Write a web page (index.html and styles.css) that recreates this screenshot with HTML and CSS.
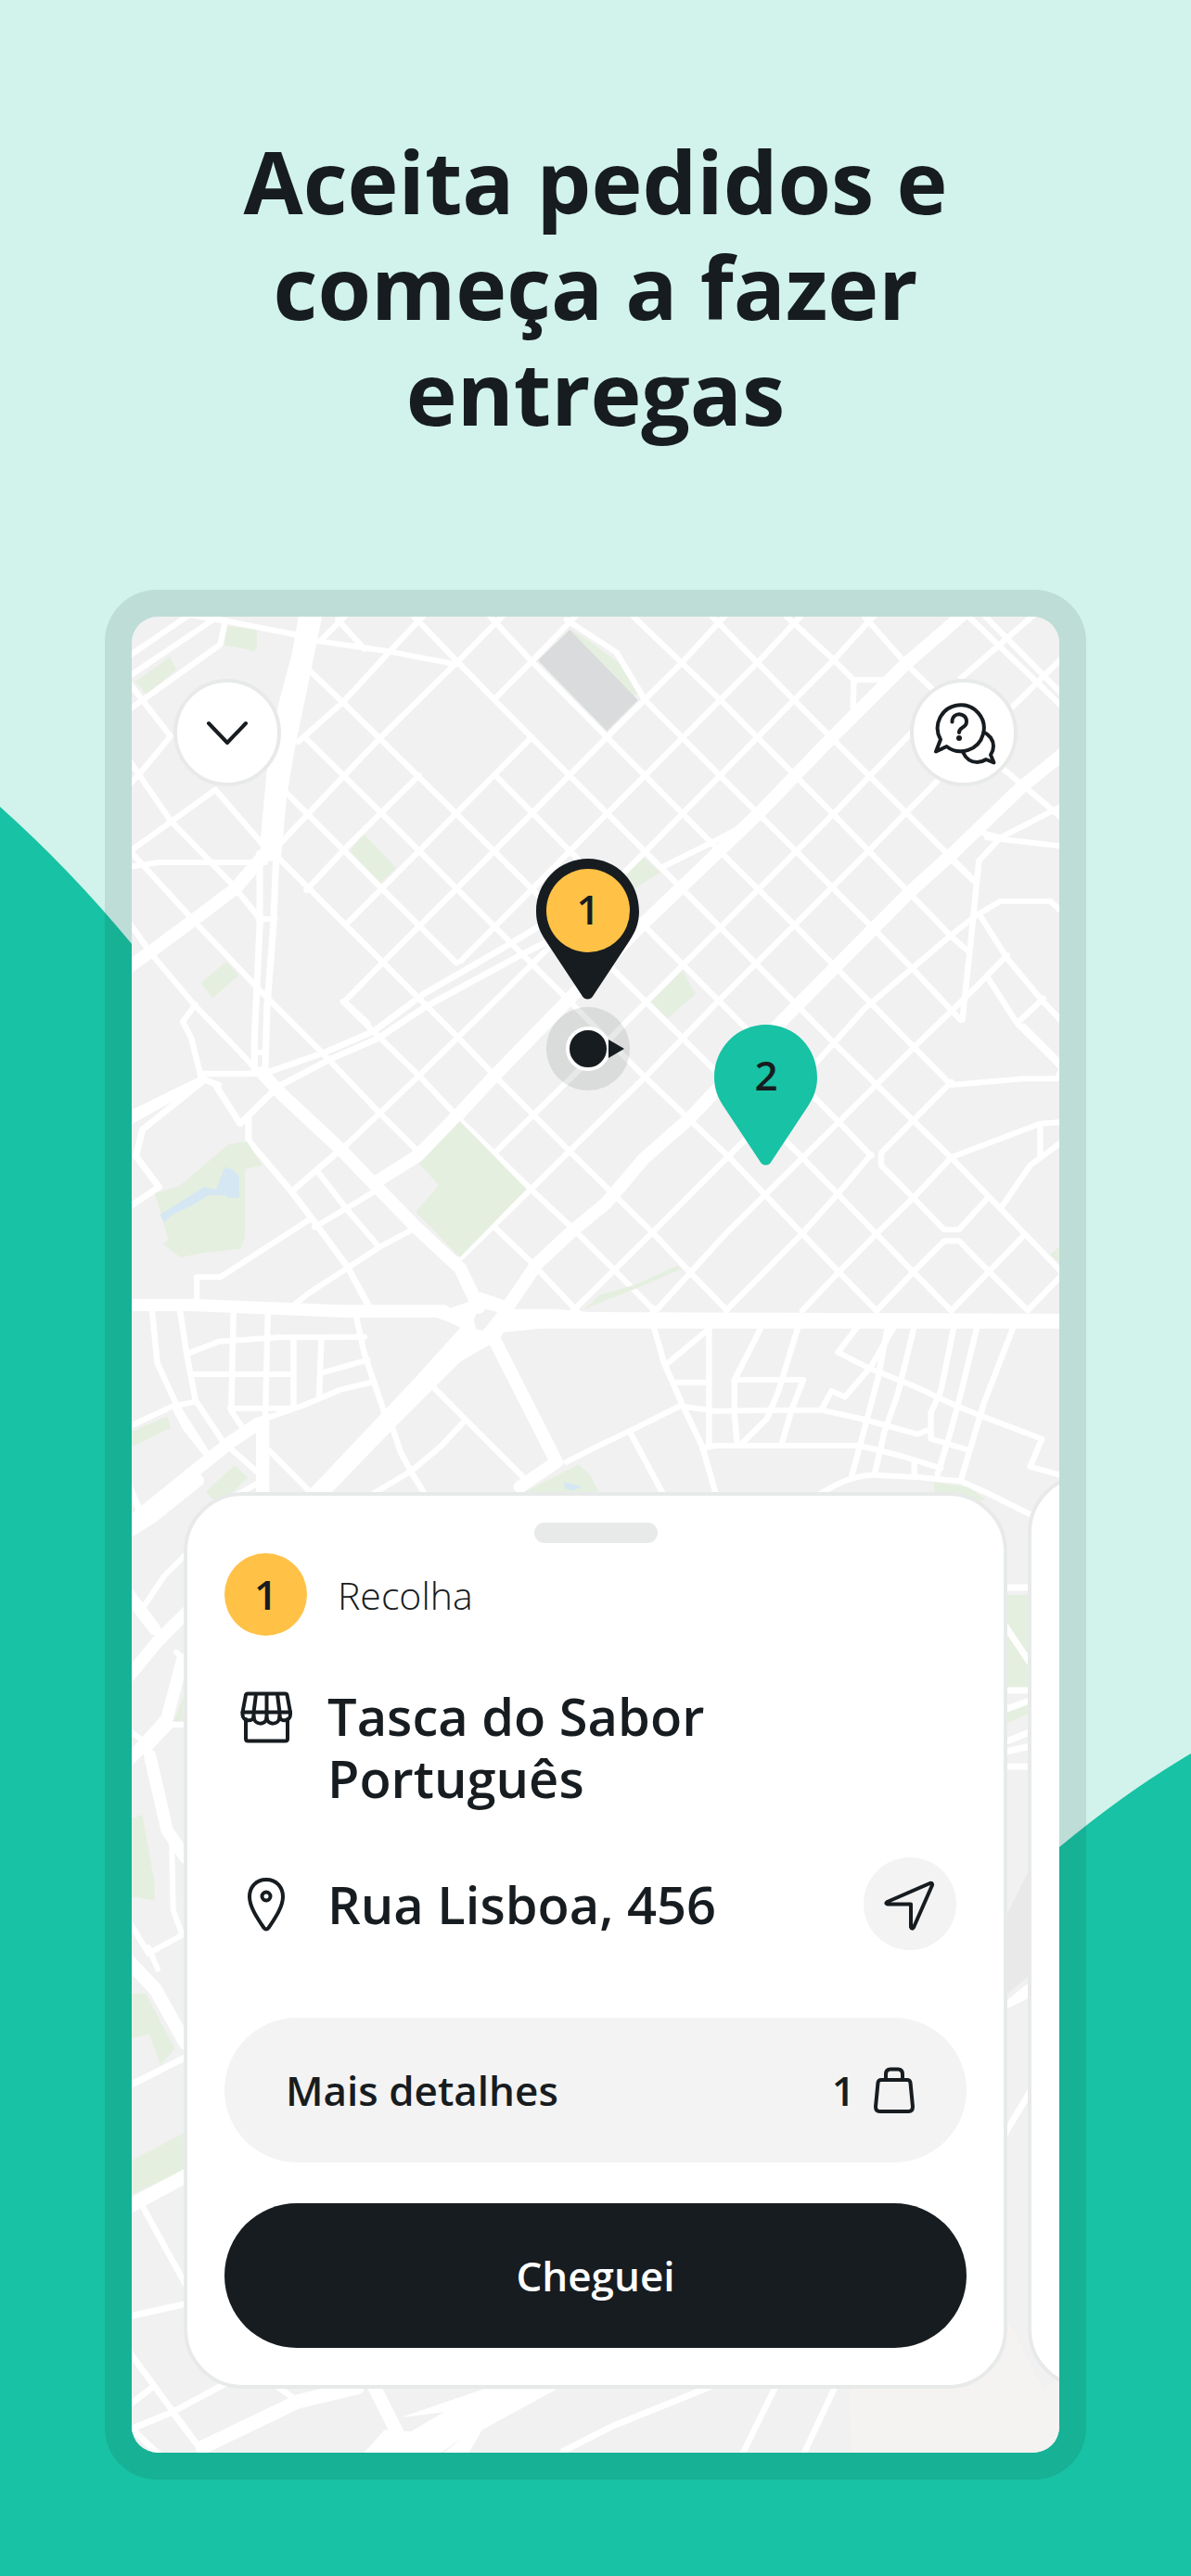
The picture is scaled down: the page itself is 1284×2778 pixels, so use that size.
FILE: index.html
```html
<!DOCTYPE html>
<html lang="pt">

<head>
    <meta charset="UTF-8" />
    <meta name="viewport" content="width=device-width, initial-scale=1.0" />
    <title>Aceita pedidos e começa a fazer entregas</title>
    <link rel="stylesheet" href="styles.css">
</head>

<body>
    <svg class="wave" viewBox="0 0 1284 2778" preserveAspectRatio="none" aria-hidden="true">
        <path d="M0 870Q76 938 142 1018Q600 2480 1142 1992Q1214 1932 1284 1891V2778H0Z" />
    </svg>

    <h1 class="title">Aceita pedidos e começa a fazer entregas</h1>

    <main class="phone">
        <div class="screen">
            <svg class="map" viewBox="142 665 1000 1980" preserveAspectRatio="xMidYMin slice">
                <!-- north part of the city -->
                <g transform="translate(100 620) scale(.357143 .333333)">
                    <g class="park">
                        <path d="M400 165l95 12v55l-10 16-20-8-68-12zM128 345l105-80 20 42-90 80zM818 838l98 110-48 50-92-105zM403 1250l38 45-80 75-35-50zM1440 175l60 40 90 70 56 100-45 20-50 100-205-230z" />
                        <path d="M1662 912l50 50-80 55-30-50zM1780 1280l40 75-85 80-50-55z" />
                    </g>
                    <path class="building" d="M1440 178l206 227-94 100-208-228z" />
                    <g class="roads">
                        <!-- old town, left -->
                        <path d="M110 262L290 130M110 328L370 140M110 436L385 225L400 150L300 130M370 142L620 195M670 212L880 245L1100 290" />
                        <path d="M110 350L235 522L140 645L100 690M110 600L235 795L420 1000L510 1120M110 896L370 695L520 880M110 890L310 1125L510 1350L710 1565L865 1740L975 1858M110 1125L180 1230L310 1395L410 1505L485 1590M310 1390L272 1445L298 1500L330 1640" />
                        <path d="M110 945L200 930H520M500 1113H550M492 1545H520" />
                        <!-- streets going south-east -->
                        <path d="M560 915L1097 1490L1213 1620L1440 1865L1692 2130L1802 2255L1915 2380" />
                        <path d="M580 700L873 1015L1098 1255M755 1380L850 1480L985 1620L1090 1740M1110 1765L1325 1990L1445 2110L1580 2255L1695 2380M1213 2110L1325 2225L1465 2385" />
                        <path d="M640 525L873 772L1213 1138L1440 1380L1667 1625L1922 1885L2252 2255L2365 2380" />
                        <path d="M645 300L755 412L1097 772L1440 1138L1780 1498L2142 1885L2477 2255L2591 2380" />
                        <path d="M740 145L820 240M1215 648L1440 893L1887 1375L2252 1770L2350 1880" />
                        <path d="M970 135L1213 405L1553 772L1892 1138L2252 1530L2591 1885L2920 2250" />
                        <path d="M1200 135L1325 280L1552 525L1892 893L2123 1138L2371 1410L2591 1650" />
                        <path d="M1430 145L1580 250L1667 405L1892 648L2122 893L2362 1150L2480 1280L2620 1440" />
                        <path d="M1632 135L1895 405L2232 770L2592 1170L2640 1215M1870 135L2117 405L2342 648L2662 990M2095 135L2237 275L2302 345M2330 135L2457 290L2540 375M2640 130L2930 430M2690 130L2930 390" />
                        <!-- streets going north-east -->
                        <path d="M565 870L760 648L865 530L1097 285L1240 130M620 540L755 412L890 255L1000 130M690 210L760 135M645 1020L755 893L985 648M765 1130L985 893L1097 772L1325 525M1215 400L1325 280L1460 130" />
                        <path d="M830 1450L760 1380L875 1255L1325 772L1552 525L1782 280L1910 130M1110 1250L1553 772L2010 280L2140 130M600 1995L755 1855L985 1620L1335 1250L1670 893L2117 405L2237 275L2360 130M1213 1870L1460 1610L1788 1255L2237 772L2480 500M2620 335L2722 240L2840 130" />
                        <path d="M1110 2210L1325 1985L1552 1745L1667 1625L1892 1375L2342 893L2560 655L2930 265" />
                        <path d="M1450 2380L1687 2130L2027 1765L2333 1400L2592 1165L2662 1105L2740 1055H2890L2930 1095M1700 2380L1912 2130L2252 1770L2477 1530L2660 1340L2760 1230" />
                        <!-- right side -->
                        <path d="M2302 340H2390M2297 345L2295 430M2740 620L2930 790M2740 850L2930 745M2700 850L2930 878M2670 830L2740 850L2675 925L2650 1190L2625 1440M2600 930L2665 995M2680 1105L2760 1240L2860 1370L2930 1450M2700 1300L2790 1450L2930 1600M2790 1450L2870 1370" />
                        <path d="M1720 945L1870 865L1950 820" />
                    </g>
                    <g class="roads boulevard">
                        <path d="M110 1268L180 1215L300 1120L430 1015L530 890" />
                        <path d="M2630 125L2452 290L2232 525L2012 770L1772 1015L1652 1138L1440 1370L1213 1620L1100 1750L980 1880L860 1960" />
                        <path d="M2950 560L2800 690L2592 905L2472 1020L2242 1268L2092 1430L1800 1760L1662 1890L1552 2030L1450 2120L1340 2230L1245 2380" />
                        <path d="M510 1610L570 1680L745 1855L975 2110L1110 2245L1165 2370" />
                    </g>
                    <g class="roads parkway">
                        <path d="M504 900V1140L488 1500V1600M554 900L545 1140L526 1400L520 1620" />
                        <path d="M330 1614H460L520 1612L700 1545L850 1475L1000 1355L1250 1200L1380 1115M560 1655L720 1565L860 1500L1000 1400L1300 1225L1440 1150" />
                        <path d="M110 1746L330 1630L380 1650M110 1770L330 1640L150 1795L130 1880L200 1980L110 2045M370 1650L445 1775L550 1665M470 1755V1830L600 1995L660 2080L770 2240L840 2380" />
                    </g>
                    <path class="avenue" d="M622 130H693L655 330L610 560L585 720L568 920L510 930L505 870L525 640L560 420L600 260Z" />
                </g>

                <!-- around the ring road -->
                <g transform="translate(100 1110) scale(.357143 .333333)">
                    <g class="park">
                        <path d="M187 530L260 508L410 372L465 362L512 440L460 452V670L445 710L340 722L265 738L212 695L228 680L212 620Z" />
                        <path d="M1108 297L1310 517L1108 738L975 590L1045 505L985 435Z" />
                        <path d="M110 1305L225 1252L235 1290L110 1355ZM428 1410L468 1450L400 1520L360 1520L342 1495ZM1300 1500L1465 1408L1500 1440L1530 1500ZM1485 905L1530 860L1640 825L1765 765L1778 775L1650 835L1530 885Z" />
                        <path d="M2540 1465L2640 1480L2695 1520L2670 1530L2540 1495ZM2930 690L2890 730L2930 765Z" />
                    </g>
                    <path class="water" d="M203 600L335 510L372 518L385 480L400 445L425 455L442 475V545H410L400 537H350L300 570L240 600L215 625ZM1422 1465L1475 1478L1450 1495L1425 1485Z" />
                    <g class="roads">
                        <path d="M675 455L765 580L865 705M600 525L740 395M670 640L765 580L850 525M970 645L865 705L765 775L650 855L610 890M655 615L385 802H314V890" />
                        <path d="M178 900L195 1080L255 1220L350 1380M262 900L285 1060L310 1200L400 1345M425 900L418 1235L450 1285M529 900L520 1290M290 1048L380 1010L560 997L820 995M300 1116H605M606 1000V1225M415 1226H610M690 1000L683 1195M690 1112L830 1070M793 920L820 1050L880 1240M520 1260L640 1215L750 1165L850 1140" />
                        <path d="M100 1290L240 1220L310 1205M250 1230L280 1290L350 1385M420 1360L520 1455L430 1510M530 1360L650 1490M1030 1160L1300 1450M1120 1270L1050 1350L960 1430L850 1500M905 1290L930 1370L960 1430L1000 1500M100 1450L140 1560M1430 1400L1512 1355L1620 1300L1780 1215" />
                        <path d="M1690 900L1695 970L1725 1080L1780 1215L1840 1350L1880 1500M1620 1300L1720 1500M1730 1085L1860 970M1860 960V1350M1750 1142H1860M1780 1220L1880 1235L2040 1232H2200L2320 1260L2490 1310L2525 1295" />
                        <path d="M2020 960L1937 1134V1240L1945 1340M2130 960L2070 1170L2035 1260L1960 1340M1937 1134H2145L2110 1230L2080 1340M1840 1356L1880 1347H2315L2440 1380L2560 1420M2310 960L2250 1045L2340 1095L2480 1155L2600 1215L2680 1250L2865 1325L2830 1415L2930 1445" />
                        <path d="M2420 960L2350 1090L2270 1190L2230 1170L2200 1230M2400 960L2370 1130L2340 1250L2290 1450M2480 960L2430 1180L2390 1300L2360 1440M2600 960L2560 1170L2530 1240V1325L2640 1360M2670 960L2620 1180L2590 1300L2550 1440M2780 960L2690 1210L2620 1460M2480 1400V1440" />
                        <path d="M2200 1500Q2290 1440 2360 1442L2500 1450L2620 1462L2700 1500L2840 1575" />
                        <path d="M2592 180L2810 160H2910L2930 120L2810 -10M2590 415L2860 305L2930 300M2860 310V410M2740 580L2830 440L2930 360" />
                        <path d="M2592 170L2477 295L2380 400V440L2477 545L2570 648H2615L2702 545M2350 405L2247 535L2142 660L2027 785L1912 910M2592 415L2477 545L2367 660L2252 785L2142 910M2367 910L2477 785L2570 685H2615L2707 785L2822 910L2930 790M2592 910L2812 665" />
                    </g>
                    <g class="roads boulevard">
                        <path d="M110 892H300L750 912H1060M1250 942H2930" />
                        <path d="M1080 1075L1000 1160L850 1310L670 1500L600 1580" />
                        <path d="M1215 1010L1400 1400L1290 1480M110 1600L410 1340L500 1275M513 1270V1500" />
                    </g>
                    <path class="avenue" d="M1250 905H1400L1500 915L2930 920V968H1350L1240 980L1225 1010L1190 1025L1110 1075L1030 1160L900 1300L720 1500H645L980 1120L1110 965L1070 945L1030 930V898L1070 905L1140 880L1145 860L1170 850L1250 880ZM1165 900L1150 940L1157 970L1178 975L1222 915Z" />
                </g>

                <!-- strip left of the order card -->
                <g transform="translate(130 1600) scale(.333333)">
                    <path class="park" d="M30 1085L70 1070L110 1290V1348L30 1335ZM203 690V768H172Z" />
                    <g class="roads">
                        <path d="M30 10L70 100M80 390L140 300L220 220M30 800L70 830M165 1130L170 1380L200 1460L90 1520L30 1420M90 1500L120 1570M180 545L205 570M80 870L165 780H220" />
                    </g>
                    <g class="roads boulevard">
                        <path d="M10 165L100 110L250 -10M30 620L120 510L220 410M20 350L110 470M200 570L150 760L70 850L20 900M95 880L150 1120L210 1210" />
                    </g>
                </g>

                <!-- strip between the two order cards -->
                <path class="park" d="M1086 1720H1110V1820H1086ZM1086 1846L1110 1836V1848L1086 1858Z" />
                <path class="pier" d="M1086 2064L1110 2015V2130L1086 2150Z" />
                <path class="beach" d="M914 2521L1060 2500L1080 2490L1125 2577L1145 2560V2650H918Z" />
                <g class="street">
                    <path d="M1080 1712H1115M1080 1748L1115 1800M1080 1823H1115M1080 1845L1115 1832M1080 1880L1115 1866M1080 1890L1115 1882M1080 1905H1115M1080 2166L1115 2138M1080 2165L1115 2148M1084 2300L1114 2250" />
                </g>

                <!-- harbour side -->
                <g transform="translate(100 2100) scale(.357143 .382653)">
                    <path class="park" d="M100 130H160L248 285L205 332L170 245L100 262ZM100 610L280 520V625L100 705Z" />
                    <g class="roads">
                        <path d="M110 390L280 310M150 730L280 950M110 1040L280 1005M110 1140L330 1420M110 1290L180 1240M110 1360L240 1310L400 1230M240 1310L330 1420M110 1350L200 1430M560 1240L620 1280M1420 1420L1568 1350L1860 1240M2060 1240L1960 1430M2240 1240L2145 1430" />
                    </g>
                    <g class="roads boulevard">
                        <path d="M100 30L190 120L280 270M110 730L290 640M330 1410L620 1280L800 1240" />
                        <path d="M850 1240L920 1370L840 1430" />
                    </g>
                    <path class="avenue" d="M930 1325L1180 1245H1400L1175 1360L1135 1425H1060L1120 1380L1050 1425H820L880 1360L960 1365L1060 1310Z" />
                </g>

                <!-- courier position -->
                <circle class="halo" cx="634" cy="1131" r="45" />
                <circle class="dot" cx="634" cy="1131" r="22" />
                <path class="heading" d="M656 1121l17 10-17 10z" />

                <!-- stops -->
                <g transform="translate(578 926)">
                    <path class="pin-dark" d="M56 0C25 0 0 25 0 57C0 69 4 79 10 88L49 147C52 153 59 153 62 147L101 88C107 79 111 69 111 57C111 25 87 0 56 0Z" />
                    <circle class="pin-face" cx="56" cy="56" r="45" />
                    <text class="pin-label" x="56" y="71">1</text>
                </g>
                <g transform="translate(770 1105)">
                    <path class="pin-green" d="M56 0C25 0 0 25 0 57C0 69 4 79 10 88L49 147C52 153 59 153 62 147L101 88C107 79 111 69 111 57C111 25 87 0 56 0Z" />
                    <text class="pin-label" x="56" y="71">2</text>
                </g>
            </svg>

            <div class="topbar">
                <button class="round" type="button" aria-label="Fechar">
                    <svg width="48" height="48" viewBox="0 0 48 48"><path d="M4 14L24 35L44 14" /></svg>
                </button>
                <button class="round help" type="button" aria-label="Ajuda">
                    <svg width="72" height="72" viewBox="0 0 72 72">
                        <path d="M11 43.500L6 56.500L17.500 51A25 25 0 1 0 11 43.500Z" />
                        <path d="M57.500 35.500C63.500 38 68 44 68 50.500C68 54 67 57 65 60L68.500 68.500L60 65C57 67 54 68 50.500 68C43.500 68 38 63.500 35 57" />
                        <path d="M23.500 24.500C23.500 13 39 14 39 24C39 32 31 29 31 36" />
                        <circle class="fill" cx="31" cy="42" r="3" />
                    </svg>
                </button>
            </div>

            <div class="orders">
                <section class="card">
                    <div class="handle"></div>
                    <div class="stop">
                        <span class="badge">1</span>
                        <span class="kind">Recolha</span>
                    </div>
                    <div class="row place">
                        <svg width="56" height="56" viewBox="0 0 56 56">
                            <path d="M6 30V51Q6 53.500 8.500 53.500H48.500Q51 53.500 51 51V30" />
                            <path d="M8 2.500H48.500Q50 2.500 50.500 4L54 22.500H2.500L6 4Q6.500 2.500 8 2.500ZM17 3L14.500 22.500V29M28.500 3V30M40 3L42.500 22.500V29" />
                            <path d="M2.500 22.500V25C2.500 33 14.500 33 14.500 27C14.500 37 28.500 37 28.500 28C28.500 37 42.500 37 42.500 27C42.500 33 54 33 54 25V22.500" />
                        </svg>
                        <h2>Tasca do Sabor Português</h2>
                    </div>
                    <div class="row">
                        <svg width="44" height="60" viewBox="0 0 44 60">
                            <path d="M22 4C11 4 4 12 4 22.500C4 33 12 45 19.500 56Q22 59 24.500 56C32 45 40 33 40 22.500C40 12 33 4 22 4Z" />
                            <circle cx="22" cy="22" r="4.500" />
                        </svg>
                        <h2>Rua Lisboa, 456</h2>
                        <button class="navigate" type="button" aria-label="Navegar">
                            <svg width="60" height="60" viewBox="0 0 60 60"><path d="M51.500 8L5.500 28Q3 30 6 30.500H31V55Q32 58 34 55.500L54 10Q54.500 7 51.500 8Z" /></svg>
                        </button>
                    </div>
                    <button class="details" type="button">
                        <span>Mais detalhes</span>
                        <span class="bags">1
                            <svg width="44" height="50" viewBox="0 0 44 50"><path d="M8 14H36Q39 14 39.500 17L42 43Q42 48 37.500 48H6.500Q2 48 2 43L4.500 17Q5 14 8 14ZM13 14V8Q13 2.500 18 2.500H26Q31 2.500 31 8V14" /></svg>
                        </span>
                    </button>
                    <button class="arrived" type="button">Cheguei</button>
                </section>
                <section class="card next"></section>
            </div>
        </div>
    </main>
</body>

</html>
```
FILE: styles.css
```css
* {
    box-sizing: border-box;
    margin: 0;
    padding: 0;
}

:root {
    --ink: #171c20;
    --green: #18c2a4;
    --mint: #d1f3eb;
    --yellow: #ffc146;
    --line: #e7eae9;
    --soft: #f3f3f3;
}

body {
    position: relative;
    display: flex;
    flex-direction: column;
    min-height: 100vh;
    padding: 138px 113px 104px;
    background: var(--mint);
    color: var(--ink);
    font-family: "Open Sans", "Noto Sans", sans-serif;
    font-weight: 600;
}

button {
    border: none;
    color: inherit;
    font: inherit;
    cursor: pointer;
}

svg {
    display: block;
    flex: none;
    fill: none;
    stroke: var(--ink);
    stroke-width: 4px;
    stroke-linecap: round;
    stroke-linejoin: round;
}

.wave {
    position: absolute;
    inset: 0;
    width: 100%;
    height: 100%;
    fill: var(--green);
    stroke: none;
}

.title {
    position: relative;
    font-size: 93px;
    font-weight: 700;
    line-height: 114px;
    text-align: center;
}

.phone {
    position: relative;
    display: flex;
    flex: 1;
    margin-top: 156px;
    padding: 29px;
    border-radius: 56px;
    background: rgba(23, 28, 32, 0.1);
}

.screen {
    position: relative;
    display: flex;
    flex: 1;
    flex-direction: column;
    justify-content: space-between;
    min-width: 0;
    overflow: hidden;
    border-radius: 28px;
    background: #f1f1f1;
}

/* map */

.map {
    position: absolute;
    inset: 0;
    width: 100%;
    height: 100%;
    stroke: none;
}

.roads {
    fill: none;
    stroke: #fff;
    stroke-width: 18px;
}

.boulevard {
    stroke-width: 40px;
}

.parkway {
    stroke-width: 20px;
}

.street {
    fill: none;
    stroke: #fff;
    stroke-width: 7px;
}

.avenue {
    fill: #fff;
    fill-rule: evenodd;
}

.park {
    fill: #e5efdf;
}

.water {
    fill: #d5e7f3;
}

.building {
    fill: #d9dbdd;
}

.pier {
    fill: #e9e9e9;
}

.beach {
    fill: #f5f3f1;
}

.halo {
    fill: rgba(23, 28, 32, 0.1);
}

.dot {
    fill: var(--ink);
    stroke: #fff;
}

.heading,
.pin-dark {
    fill: var(--ink);
}

.pin-green {
    fill: var(--green);
}

.pin-face {
    fill: var(--yellow);
}

.pin-label {
    fill: var(--ink);
    font-size: 44px;
    text-anchor: middle;
}

/* floating buttons */

.topbar {
    position: relative;
    display: flex;
    justify-content: space-between;
    padding: 67px 45px 0;
}

.round {
    display: grid;
    place-items: center;
    width: 116px;
    height: 116px;
    border: 4px solid var(--line);
    border-radius: 50%;
    background: #fff;
}

.fill {
    fill: var(--ink);
    stroke: none;
}

/* orders */

.orders {
    position: relative;
    display: flex;
    align-items: flex-end;
    gap: 22px;
    padding: 0 0 69px 56px;
}

.card {
    display: flex;
    flex: none;
    flex-direction: column;
    width: calc(100% - 56px);
    padding: 29px 40px 40px;
    border: 4px solid var(--line);
    border-radius: 64px;
    background: #fff;
}

.next {
    align-self: stretch;
    margin-top: -20px;
}

.handle {
    align-self: center;
    width: 133px;
    height: 22px;
    border-radius: 11px;
    background: var(--line);
}

.stop {
    display: flex;
    align-items: center;
    gap: 33px;
    margin: 11px 0 53px;
}

.badge {
    width: 89px;
    border-radius: 50%;
    background: var(--yellow);
    font-size: 44px;
    line-height: 89px;
    text-align: center;
}

.kind {
    font-size: 41px;
    font-weight: 300;
}

.row {
    display: grid;
    grid-template-columns: 89px 1fr 100px;
    align-items: center;
    column-gap: 22px;
    padding-right: 11px;
}

.row > svg {
    justify-self: center;
}

.place {
    align-items: start;
    margin-bottom: 52px;
}

.place > svg {
    margin-top: 7px;
}

.row h2 {
    font-size: 56px;
    font-weight: 600;
    line-height: 67px;
}

.navigate {
    display: grid;
    place-items: center;
    width: 100px;
    height: 100px;
    border-radius: 50%;
    background: var(--soft);
}

.details,
.arrived {
    height: 156px;
    border-radius: 78px;
    font-size: 44px;
}

.details {
    display: flex;
    align-items: center;
    justify-content: space-between;
    margin: 73px 0 44px;
    padding: 0 56px 0 66px;
    background: var(--soft);
}

.bags {
    display: flex;
    align-items: center;
    gap: 20px;
}

.arrived {
    background: var(--ink);
    color: #fff;
}
```
